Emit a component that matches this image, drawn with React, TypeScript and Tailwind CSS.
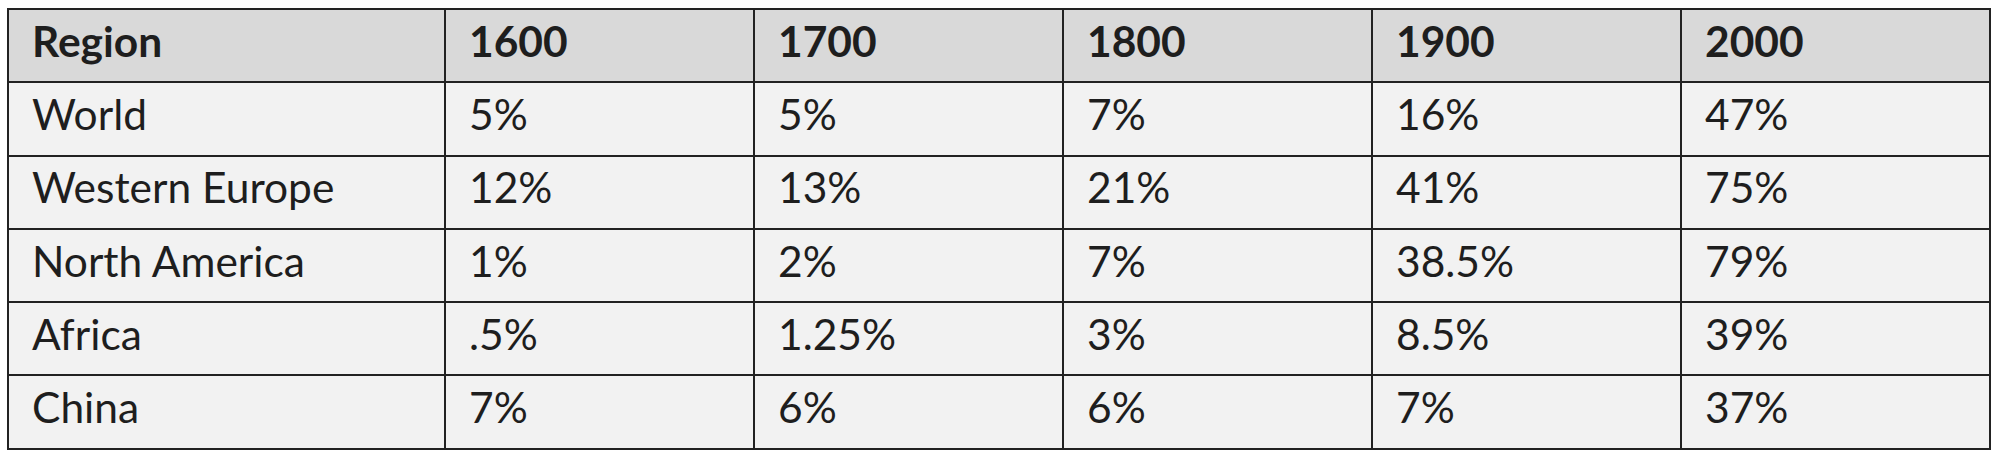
const header = ["Region", "1600", "1700", "1800", "1900", "2000"];

const rows = [
  ["World", "5%", "5%", "7%", "16%", "47%"],
  ["Western Europe", "12%", "13%", "21%", "41%", "75%"],
  ["North America", "1%", "2%", "7%", "38.5%", "79%"],
  ["Africa", ".5%", "1.25%", "3%", "8.5%", "39%"],
  ["China", "7%", "6%", "6%", "7%", "37%"],
];

export default function App() {
  return (
    <div className="w-[2000px] h-[460px] bg-white pl-[7px] pt-[8px] font-['Lato',sans-serif] text-[#1e1e1e]">
      <div className="grid w-[1984px] grid-cols-[435px_repeat(5,1fr)] auto-rows-[71.3px] gap-[2px] bg-[#222] p-[2px]">
        {header.map((h) => (
          <div key={h} className="flex items-center bg-[#d9d9d9] pl-[23px] pb-[10px] text-[42.5px] font-bold">
            {h}
          </div>
        ))}
        {rows.map((r) =>
          r.map((c, i) => (
            <div key={r[0] + i} className="flex items-center bg-[#f2f2f2] pl-[23px] pb-[10px] text-[42.5px]">
              {c}
            </div>
          ))
        )}
      </div>
    </div>
  );
}
